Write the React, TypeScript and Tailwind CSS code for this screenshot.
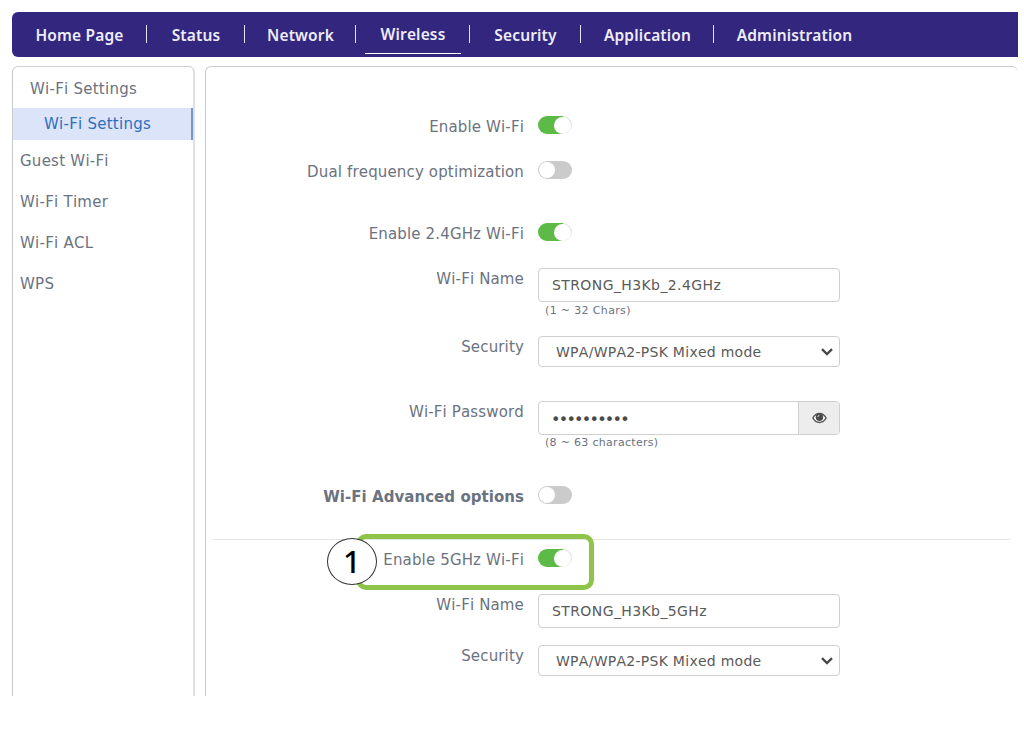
import type { ReactNode } from 'react'

const navItems = [
  { label: 'Home Page', width: 'w-[135px]' },
  { label: 'Status', width: 'w-[98px]' },
  { label: 'Network', width: 'w-[111px]' },
  { label: 'Wireless', width: 'w-[114px]', active: true },
  { label: 'Security', width: 'w-[111px]' },
  { label: 'Application', width: 'w-[133px]' },
  { label: 'Administration', width: 'w-[161px]', last: true },
]

const sideItems = ['Guest Wi-Fi', 'Wi-Fi Timer', 'Wi-Fi ACL', 'WPS']

function NavBar() {
  return (
    <nav className="flex h-[45px] w-[1006px] items-start rounded-l-[6px] bg-[#32267f] font-['Noto_Sans',sans-serif] text-[15.5px] font-semibold text-[#eeecf8]">
      {navItems.map((item) => (
        <div key={item.label} className={`${item.width} flex h-full items-start justify-between`}>
          <span className="w-px" />
          <span
            className={
              item.active
                ? 'mt-[9px] h-[33px] w-[96px] border-b border-white text-center leading-[26px]'
                : 'mt-[10px] leading-[26px]'
            }
          >
            {item.label}
          </span>
          <span className={item.last ? 'w-px' : 'mt-[13px] h-[18px] w-px bg-[#e4e2f2]'} />
        </div>
      ))}
    </nav>
  )
}

function Sidebar() {
  return (
    <aside className="h-[630px] w-[183px] rounded-t-[6px] border-t border-r-2 border-l border-t-[#cfcfcf] border-r-[#dfdfdf] border-l-[#c9c9c9] tracking-[0.25px]">
      <div className="flex h-[41px] items-center pt-[3px] pl-[17px]">Wi-Fi Settings</div>
      <div className="flex h-[32px] items-center border-r-2 border-[#6f96cf] bg-[#dbe4f9] pt-px pl-[31px] text-[#2f6fbb]">
        Wi-Fi Settings
      </div>
      {sideItems.map((item) => (
        <div key={item} className="flex h-[41px] items-center pt-[2px] pl-[7px]">
          {item}
        </div>
      ))}
    </aside>
  )
}

function Toggle({ on = false }: { on?: boolean }) {
  return (
    <button
      className={`flex h-[18px] w-[34px] items-center rounded-full ${
        on ? 'justify-end bg-linear-to-r from-[#5dba47] from-75% to-[#e4e4e4] to-75%' : 'bg-[#cbcbcb] pl-px'
      }`}
    >
      <span className={`rounded-full bg-white ${on ? 'mr-px size-[17px]' : 'size-[16px]'}`} />
    </button>
  )
}

function Row({ label, bold, className, children }: { label: string; bold?: boolean; className: string; children: ReactNode }) {
  return (
    <div className={`flex items-start gap-[14px] ${className}`}>
      <label className={`w-[318px] text-right leading-[22px] ${bold ? 'font-bold tracking-[0.05px]' : ''}`}>{label}</label>
      {children}
    </div>
  )
}

function TextField({ value }: { value: string }) {
  return (
    <div className="flex h-[34px] w-[302px] items-center rounded-[4px] border border-[#cfcfcf] pt-px pl-[13px] text-[14px] tracking-[0.4px] text-[#5a5a5a]">
      {value}
    </div>
  )
}

function SelectField({ value }: { value: string }) {
  return (
    <div className="flex h-[31px] w-[302px] items-center justify-between rounded-[4px] border border-[#cfcfcf] pr-[6px] pl-[17px] text-[14px] tracking-[0.27px] text-[#5a5a5a]">
      <span className="pt-px">{value}</span>
      <svg width="12" height="8" viewBox="0 0 12 8" fill="none" stroke="#484848" strokeWidth="2.4">
        <path d="M1 1.2 6 6l5-4.8" />
      </svg>
    </div>
  )
}

function EyeIcon() {
  return (
    <svg width="15" height="12" viewBox="0 0 15 12">
      <path d="M.9 6C2.4 3.2 4.7 1.4 7.5 1.4S12.6 3.2 14.1 6C12.6 8.8 10.3 10.5 7.5 10.5S2.4 8.8.9 6Z" fill="#fff" stroke="#555" strokeWidth="1.5" />
      <circle cx="7.5" cy="5.2" r="3.7" fill="#4a4a4a" />
      <path d="M5.8 5A1.7 1.7 0 0 1 7.3 3.3" fill="none" stroke="#ddd" strokeWidth="1" />
    </svg>
  )
}

export default function App() {
  return (
    <div className="h-[745px] w-[1024px] overflow-hidden bg-white pt-3 pl-3 font-['DejaVu_Sans',sans-serif] text-[15px] tracking-[0.15px] text-[#6b7280] [font-kerning:none]">
      <NavBar />
      <div className="mt-[9px] flex gap-[10px]">
        <Sidebar />
        <main className="h-[630px] w-[813px] rounded-t-[6px] border-t border-l border-[#cbcbcb]">
          <Row label="Enable Wi-Fi" className="mt-[49px] h-[45px]">
            <Toggle on />
          </Row>
          <Row label="Dual frequency optimization" className="h-[62px]">
            <Toggle />
          </Row>
          <Row label="Enable 2.4GHz Wi-Fi" className="h-[45px]">
            <Toggle on />
          </Row>
          <Row label="Wi-Fi Name" className="h-[68px]">
            <div>
              <TextField value="STRONG_H3Kb_2.4GHz" />
              <p className="pl-[7px] text-[11px] leading-[17px] tracking-[0.35px]">(1 ~ 32 Chars)</p>
            </div>
          </Row>
          <Row label="Security" className="h-[65px]">
            <SelectField value="WPA/WPA2-PSK Mixed mode" />
          </Row>
          <Row label="Wi-Fi Password" className="h-[85px]">
            <div>
              <div className="flex h-[34px] w-[302px] rounded-[4px] border border-[#cfcfcf] text-[16px] tracking-[-1.75px] text-[#4a4a4a]">
                <span className="flex flex-1 items-center pt-[3px] pl-3">••••••••••</span>
                <span className="flex w-[41px] items-center justify-center rounded-r-[3px] border-l border-[#cfcfcf] bg-[#ededed]">
                  <EyeIcon />
                </span>
              </div>
              <p className="pl-[7px] text-[11px] leading-[15px] tracking-[0.3px]">(8 ~ 63 characters)</p>
            </div>
          </Row>
          <Row label="Wi-Fi Advanced options" bold className="h-[53px]">
            <Toggle />
          </Row>
          <hr className="mr-2 ml-[7px] border-[#e4e4e4]" />
          <div className="relative pt-[9px]">
            <div className="absolute top-[-6px] left-[150px] h-[56px] w-[238px] rounded-[10px] border-[5px] border-[#8dc449]" />
            <div className="absolute top-[-2px] left-[121px] flex h-[47px] w-[50px] items-center justify-center rounded-[50%] border border-[#333] bg-white font-['Noto_Sans',sans-serif] text-[31px] font-medium text-black">
              <span className="-mt-px">1</span>
            </div>
            <Row label="Enable 5GHz Wi-Fi" className="relative h-[45px]">
              <Toggle on />
            </Row>
          </div>
          <Row label="Wi-Fi Name" className="h-[51px]">
            <TextField value="STRONG_H3Kb_5GHz" />
          </Row>
          <Row label="Security" className="">
            <SelectField value="WPA/WPA2-PSK Mixed mode" />
          </Row>
        </main>
      </div>
    </div>
  )
}
